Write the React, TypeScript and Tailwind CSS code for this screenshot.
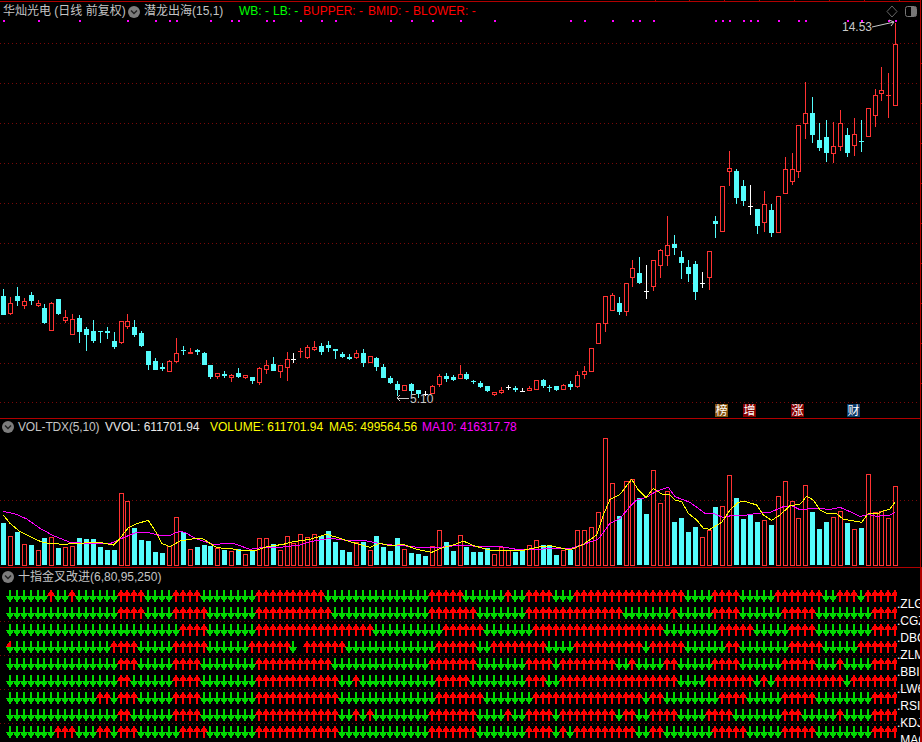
import React from "react";

const RED = "#ff3232";
const CYAN = "#54fcfc";
const WHITE = "#ffffff";
const GRID = "#7a0808";

const SKIPS = [6, 18, 30, 42, 54, 67, 79, 91, 103, 115, 127];
const col = (i: number) => 3 + 7 * i - SKIPS.filter((s) => s <= i).length;

type C = [string, number, number, number, number];
// kind, wickTop, wickBottom, bodyTop, bodyBottom, in 3x reference units
const part1: C[] = [
  ["C",27,105,48,105],["R",52,105,70,101],["C",21,78,48,63],["R",54,87,64,77],["C",37,75,45,63],["R",60,83,70,77],
  ["C",72,132,84,129],["R",66,150,70,150],["C",57,105,57,102],["R",90,131,112,120],["R",102,162,118,162],["C",105,189,114,156],
  ["C",141,213,148,165],["C",120,189,153,183],["C",153,189,153,156],["C",141,177,153,159],["C",156,207,183,201],["R",123,192,124,186],
  ["R",102,147,124,138],["C",120,171,141,165],["C",153,201,159,198],["C",213,270,213,255],["C",234,270,243,270],["C",249,273,261,267],
  ["R",240,276,243,275],["R",174,249,220,243],["C",198,225,210,213],["S",204,222,216,222],["C",207,225,212,216],["C",216,255,219,255],
  ["C",255,297,255,291],["R",279,297,280,288],["C",273,294,282,288],["R",282,306,285,292],["C",264,294,279,291],["R",285,297,286,293],
  ["C",291,312,291,303],["R",261,315,264,308],["R",240,282,255,267],["C",231,273,252,273],["R",255,294,255,273],["R",216,303,237,261],
  ["W",219,249,237,237],["D",204,234,213,213],["R",195,237,201,231],["R",183,213,202,209],["C",189,225,198,216],["C",183,216,195,204],
  ["C",207,237,209,215],["C",216,234,222,231],["C",222,240,233,237],["R",210,237,219,231],["C",207,261,219,249],["R",228,249,229,246],
  ["C",231,273,234,261],["C",252,294,261,294],["C",288,312,294,309],["C",303,348,312,330],["R",315,333,316,332],["C",309,342,312,333],
  ["C",330,354,330,342],["W",333,348,342,342],["R",315,339,319,339],["R",282,321,288,312],["C",279,306,288,297],["C",285,303,293,300],
  ["R",255,294,283,294],["C",276,300,282,297],["C",300,312,303,306],["C",303,324,309,321],["C",318,336,318,333],["R",336,348,337,344],
  ["R",321,342,331,338],["W",315,330,322,322],["C",318,336,324,330],["W",324,336,333,333],["R",318,333,325,332],["R",300,327,301,327],
  ["C",297,324,300,318],["C",315,336,321,321],["C",318,333,318,330],["R",312,330,316,329],["C",303,330,312,321],["R",273,324,285,320],
  ["R",258,297,274,282],["R",205,273,205,273],
];
// The remainder is measured from y=200 in 3x units
const part2: C[] = [
  ["R",370,431,370,431],["R",289,396,289,370],["R",279,333,286,330],["C",291,345,309,336],["R",249,348,250,335],["R",180,261,205,231],
  ["C",171,252,219,249],["W",195,297,273,273],["R",180,273,181,258],["R",147,234,151,197],["R",48,198,136,165],["C",105,165,132,144],
  ["C",153,237,171,189],["C",180,246,201,222],["C",183,300,192,276],["W",216,264,250,250],["R",153,270,154,231],["C",48,114,63,72],
];
// Last stretch is measured from y=0 in 3x units
const part3: C[] = [
  ["R",558,693,559,693],["R",453,558,504,515],["C",507,612,513,594],["C",540,618,558,603],["W",555,645,619,619],["C",627,702,627,678],
  ["R",573,696,612,668],["C",612,711,630,699],["R",588,698,588,698],["R",471,582,507,579],["R",459,555,507,545],["R",375,534,376,515],
  ["R",246,417,340,371],["C",291,429,339,405],["C",369,453,420,444],["C",360,486,411,459],["R",366,489,438,461],["R",330,453,370,440],
  ["C",384,471,405,459],["R",354,468,403,437],["C",360,456,424,424],["R",324,411,325,410],["R",267,381,286,347],["R",201,303,271,281],
  ["D",219,354,286,286],["R",69,318,132,317],
];
const candles = [
  ...part1.map((c) => ({ k: c[0], a: 280 + Math.floor(c[1] / 3), b: 280 + Math.floor(c[2] / 3), t: 280 + Math.floor(c[3] / 3), u: 280 + Math.floor(c[4] / 3) })),
  ...part2.map((c) => ({ k: c[0], a: 200 + Math.floor(c[1] / 3), b: 200 + Math.floor(c[2] / 3), t: 200 + Math.floor(c[3] / 3), u: 200 + Math.floor(c[4] / 3) })),
  ...part3.map((c) => ({ k: c[0], a: Math.floor(c[1] / 3), b: Math.floor(c[2] / 3), t: Math.floor(c[3] / 3), u: Math.floor(c[4] / 3) })),
];

const vols =
  "C324 R364 C351 R388 C391 R406 C369 R367 C400 R397 R394 C369 C372 C372 C397 C405 C405 R235 R259 C339 C375 C378 C411 C414 R394 R307 C351 R403 C397 C391 C393 R400 C406 R409 C403 R418 C406 R370 R370 C388 R406 R364 R385 R358 R367 R358 C364 C348 C381 C405 C411 R382 C381 R406 C363 C396 C408 C369 R403 C414 C417 C423 R394 R346 C381 C408 R361 C396 C411 C411 C399 R418 R396 R406 C411 C406 R391 R376 C391 C394 C420 R406 C406 R346 R346 R337 R292 R70 R205 C303 R199 R193 C250 C297 R166 R265 R229 C321 C309 C351 C336 R367 R346 C276 R274 R181 C250 C312 C300 C321 R316 C330 R244 R199 R259 R310 R211 C291 C342 C321 R307 R289 C324 R343 C339 R178 R292 R289 R310 R214"
    .split(" ")
    .map((s) => ({ k: s[0], t: 415 + Math.floor(Number(s.slice(1)) / 3) }));

const toPts = (base: number, p: number[][]) => p.map(([x, y]) => `${base + x / 3},${415 + y / 3}`).join(" ");
const ma5 = [
  toPts(0, [[10,300],[30,325],[60,350],[100,370],[130,383],[190,388],[230,385],[300,382],[340,390],[360,370],[385,338],[410,326],[445,316],[470,355],[485,385],[510,395],[540,378],[590,370],[610,372],[650,398],[700,402],[730,408],[770,405],[800,395],[850,388],[880,380],[930,373]]),
  toPts(310, [[20,367],[50,358],[90,370],[130,383],[180,397],[210,385],[240,392],[280,388],[320,403],[365,412],[400,397],[430,390],[460,378],[490,392],[540,405],[630,408],[680,397],[720,392],[780,405],[820,388],[860,360],[880,300]]),
  toPts(610, [[0,253],[30,238],[65,193],[85,225],[108,248],[130,220],[155,237],[180,240],[195,255],[215,260],[235,295],[260,315],[280,340],[300,343],[335,322],[360,285],[385,262],[405,259],[440,270],[460,300],[485,316],[510,300],[540,272],[570,268],[590,244],[610,255],[630,285],[650,295],[680,297],[700,312],[720,316],[755,322],[775,295],[800,297],[820,288],[840,282],[855,262]]),
].join(" ");
const ma10 = [
  toPts(0, [[10,289],[50,298],[80,312],[120,340],[160,362],[210,382],[260,385],[330,386],[370,368],[410,352],[440,352],[480,361],[510,361],[540,348],[560,355],[590,372],[640,388],[700,385],[750,403],[790,397],[840,397],[900,390],[930,380]]),
  toPts(310, [[60,370],[110,376],[170,378],[220,388],[300,394],[340,399],[400,396],[450,390],[500,394],[580,396],[630,405],[700,402],[780,401],[830,385],[865,372]]),
  toPts(610, [[0,325],[30,310],[60,275],[80,255],[110,247],[140,228],[175,217],[195,245],[240,262],[285,295],[310,295],[340,308],[370,300],[410,300],[440,295],[480,292],[520,275],[545,272],[570,284],[610,280],[660,283],[690,277],[720,290],[750,305],[775,298],[800,304],[840,300],[855,292]]),
].join(" ");

// Runs of arrows per row: D = down, U = up, - = none; starting at candle 1
const rows: [string, string][] = [
  ["ZLG", "D6 U1 D2 U1 D6 U4 D4 U4 D8 U10 D15 U5 D6 U1 D2 U4 D3 U16 D4 U4 D5 U7 D2 U3 D1 U5"],
  ["CGZ", "D16 U4 D4 U5 D7 U11 D14 U7 D7 U14 D7 U1 D5 U4 D6 U5 D8 U4"],
  ["DBC", "D25 U4 D7 U17 D10 U6 D7 U19 D8 U5 D5 U4 D8 U4"],
  ["ZLM", "X1 D14 U4 D5 U5 D6 U6 D1 -1 U6 D13 U6 D2 U8 D4 U10 D1 U5 D6 U2 D7 U5 D5 U6"],
  ["BBI", "D16 U3 D5 U4 D8 U11 D14 U7 D7 U4 D1 U8 D2 U1 D4 U2 D5 U4 D6 U5 D3 U1 D4 U4"],
  ["LW6", "D16 U2 D6 U4 D8 U12 D2 U1 D11 U5 D8 U3 D2 U17 D4 U7 D1 U1 D1 U10 D1 U7"],
  ["RSI", "D13 U2 D1 U3 D5 U4 D8 U12 D14 U7 D7 U16 D1 U2 D8 U4 D5 U5 D8 U4"],
  ["KDJ", "D16 U2 D6 U4 D8 U12 D2 U1 D1 U1 D8 U7 D4 U1 D2 U4 D1 U8 D1 U2 D2 U4 D4 U4 D7 U3 D5 U1 D4 U4"],
  ["MAC", "D7 U3 D3 U2 D1 U3 D6 U4 D7 U12 D13 U7 D7 U4 D1 U1 D1 U9 D2 U2 D7 U5 D5 U5 D8 U4"],
];
const expand = (s: string) => s.split(" ").flatMap((t) => Array(Number(t.slice(1))).fill(t[0]) as string[]);

const GREEN = "#00d800";
function Arrow({ x, k }: { x: number; k: string }) {
  if (k === "-") return null;
  if (k === "X") {
    return (
      <g shapeRendering="crispEdges">
        <rect x={x - 1} y={0} width={2} height={12} fill={GREEN} />
        <polygon points={`${x - 4.5},6 ${x + 4.5},6 ${x},12`} fill={GREEN} />
        <polygon points={`${x - 4.5},6 ${x},0 ${x},6`} fill="#ff0000" />
        <rect x={x} y={0} width={1} height={6} fill="#ff0000" />
      </g>
    );
  }
  return k === "U" ? (
    <g shapeRendering="crispEdges">
      <rect x={x - 1} y={0} width={2} height={12} fill="#ff0000" />
      <polygon points={`${x},0 ${x + 4.5},6 ${x - 4.5},6`} fill="#ff0000" />
    </g>
  ) : (
    <g shapeRendering="crispEdges">
      <rect x={x - 1} y={0} width={2} height={12} fill={GREEN} />
      <polygon points={`${x - 4.5},6 ${x + 4.5},6 ${x},12`} fill={GREEN} />
    </g>
  );
}

const Hint = () => (
  <svg width="12" height="12" viewBox="0 0 12 12" className="shrink-0">
    <circle cx="6" cy="6" r="6" fill="#7d7d7d" />
    <path d="M3 4.5 L6 7.5 L9 4.5" fill="none" stroke="#222" strokeWidth="1.4" />
  </svg>
);

const Dotted = ({ y, x2 = 920 }: { y: number; x2?: number }) => (
  <line x1="0" x2={x2} y1={y + 0.5} y2={y + 0.5} stroke={GRID} strokeDasharray="1 3" shapeRendering="crispEdges" />
);

const mono = { fontFamily: '"Liberation Sans","Noto Sans CJK SC",sans-serif' };
const dots = [3,38,79,127,155,169,176,210,231,238,266,273,300,321,335,390,411,432,460,494,570,584,612,632,639,653,715,722,729,743,750,757,778,798,805,847,861,888,895];
const rightTicks = [63, 103, 143, 183, 223, 263, 303, 343, 383];
const topTicks = [655, 689, 724, 759, 794, 829, 864, 899];

export default function App() {
  return (
    <div className="flex h-[742px] w-[922px] flex-col overflow-hidden bg-black" style={mono}>
      {/* Price panel */}
      <section className="relative h-[418px] w-[921px] shrink-0 border-r border-r-[#b00000]">
        <div className="relative mt-px flex h-[19px] items-start whitespace-nowrap border-t border-t-[#b00000] pl-[3px] pt-[2px] text-[12px] leading-[15px] text-[#c4c4c4]">
          <span className="w-[125px]">华灿光电 (日线 前复权)</span>
          <span className="mt-[2px]"><Hint /></span>
          <span className="ml-[4px] w-[95px]">潜龙出海(15,1)</span>
          <span className="w-[34px] text-[#00ff00]">WB: -</span>
          <span className="w-[30px] text-[#00ff00]">LB: -</span>
          <span className="w-[65px] text-[#ff0000]">BUPPER: -</span>
          <span className="w-[45px] text-[#ff0000]">BMID: -</span>
          <span className="text-[#ff0000]">BLOWER: -</span>
        </div>
        <svg width="920" height="398" viewBox="0 20 920 398" className="block overflow-visible">
          {topTicks.map((x) => (
            <rect key={x} x={x} y={0} width={1} height={1} fill="#b00000" />
          ))}
          {rightTicks.map((y) => (
            <rect key={y} x={921} y={y} width={1} height={1} fill="#b00000" />
          ))}
          {[43, 83, 123, 163, 203, 243, 283, 323, 363, 402].map((y) => (
            <Dotted key={y} y={y} />
          ))}
          {dots.map((x) => (
            <rect key={x} x={x} y={20} width={2} height={2} fill="#ff00ff" shapeRendering="crispEdges" />
          ))}
          <g shapeRendering="crispEdges">
            {candles.map((c, i) => {
              const x = col(i);
              const color = c.k === "C" ? CYAN : c.k === "W" ? WHITE : RED;
              return (
                <g key={i}>
                  <rect x={x} y={c.a} width={1} height={Math.max(1, c.b - c.a)} fill={color} />
                  {c.k === "C" && <rect x={x - 2} y={c.t} width={5} height={Math.max(1, c.u - c.t)} fill={CYAN} />}
                  {c.k === "R" && <rect x={x - 1.5} y={c.t + 0.5} width={4} height={Math.max(1, c.u - c.t)} fill="#000" stroke={RED} />}
                  {c.k === "S" && <rect x={x - 2} y={c.t} width={5} height={2} fill={RED} />}
                  {(c.k === "W" || c.k === "D") && <rect x={x - 2} y={c.t} width={5} height={1} fill={color} />}
                </g>
              );
            })}
          </g>
          <path d="M872 27 L894 22 M889 20 L894 22 L891 26" fill="none" stroke="#c8c8c8" />
          <path d="M397 398 L409 398 M400 395 L397 398 L400 401" fill="none" stroke="#c8c8c8" shapeRendering="crispEdges" />
          <path d="M892 6 L897 11.5 L892 17 L887 11.5 Z" fill="none" stroke="#666" />
          <rect x="905.5" y="6.5" width="11" height="10" rx="2" fill="none" stroke="#777" />
          <rect x="911" y="7" width="5" height="9" fill="#777" />
        </svg>
        <span className="absolute left-[842px] top-[20px] text-[12px] leading-[15px] text-[#c8c8c8]">14.53</span>
        <span className="absolute left-[410px] top-[392px] text-[12px] leading-[15px] text-[#c8c8c8]">5.10</span>
        <span className="absolute left-[715px] top-[404px] flex h-[13px] w-[13px] items-center justify-center bg-[#85520f] text-[12px] leading-none text-white">榜</span>
        <span className="absolute left-[743px] top-[404px] flex h-[13px] w-[13px] items-center justify-center bg-[#850000] text-[12px] leading-none text-white">增</span>
        <span className="absolute left-[791px] top-[404px] flex h-[13px] w-[13px] items-center justify-center bg-[#850000] text-[12px] leading-none text-white">涨</span>
        <span className="absolute left-[847px] top-[404px] flex h-[13px] w-[13px] items-center justify-center bg-[#0c3a68] text-[12px] leading-none text-white">财</span>
      </section>

      {/* Volume panel */}
      <section className="h-[149px] w-[921px] shrink-0 border-r border-t border-r-[#b00000] border-t-[#b00000]">
        <div className="flex h-[18px] items-center whitespace-nowrap pb-[2px] pl-[2px] text-[12px] leading-none text-[#c4c4c4]">
          <Hint />
          <span className="ml-[4px] w-[87px] tracking-[-0.15px]">VOL-TDX(5,10)</span>
          <span className="w-[105px] text-[#e8e8e8]">VVOL: 611701.94</span>
          <span className="w-[119px] text-[#ffff00]">VOLUME: 611701.94</span>
          <span className="w-[93px] text-[#ffff00]">MA5: 499564.56</span>
          <span className="text-[#ff00ff]">MA10: 416317.78</span>
        </div>
        <svg width="920" height="130" viewBox="0 437 920 130" className="block">
          <Dotted y={500} />
          <g shapeRendering="crispEdges">
            {vols.map((v, i) =>
              v.k === "C" ? (
                <rect key={i} x={col(i) - 2} y={v.t} width={5} height={565 - v.t} fill={CYAN} />
              ) : (
                <rect key={i} x={col(i) - 1.5} y={v.t + 0.5} width={4} height={565 - v.t} fill="#000" stroke={RED} />
              ),
            )}
          </g>
          <polyline points={ma10} fill="none" stroke="#ff00ff" shapeRendering="crispEdges" />
          <polyline points={ma5} fill="none" stroke="#ffff00" shapeRendering="crispEdges" />
        </svg>
      </section>

      {/* Signal panel */}
      <section className="relative flex-1 border-r-2 border-t border-r-[#b00000] border-t-[#b00000]">
        <div className="flex h-[20px] items-center whitespace-nowrap pb-[2px] pl-[2px] text-[12px] leading-none text-[#c4c4c4]">
          <Hint />
          <span className="ml-[4px]">十指金叉改进(6,80,95,250)</span>
        </div>
        <svg width="920" height="120" viewBox="0 620 920 120" className="pointer-events-none absolute left-0 top-[52px]">
          {[621, 655, 689, 723].map((y) => (
            <Dotted key={y} y={y} />
          ))}
        </svg>
        <div className="relative mt-[2px] flex flex-col">
          {rows.map(([name, spec]) => (
            <div key={name} className="flex h-[17px] items-start">
              <svg width="897" height="13" viewBox="0 0 897 13" className="block shrink-0">
                {expand(spec).map((k, i) => (
                  <Arrow key={i} x={col(i + 1)} k={k} />
                ))}
              </svg>
              <span className="mt-[7px] w-[23px] overflow-hidden whitespace-nowrap text-[12px] leading-[14px] text-white">.{name}</span>
            </div>
          ))}
        </div>
      </section>
    </div>
  );
}
